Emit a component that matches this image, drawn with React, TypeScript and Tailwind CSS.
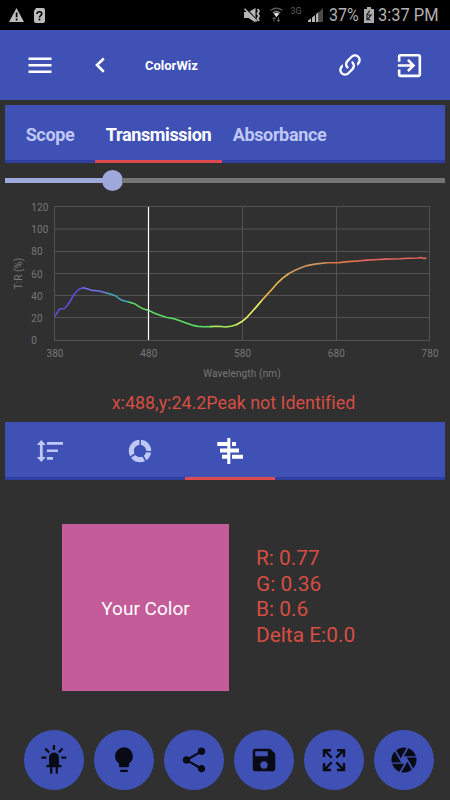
import React from "react";
import {
  MdCamera,
  MdExitToApp,
  MdSave,
  MdShare,
} from "react-icons/md";

type Point = [number, number];

const curve: { color: string; points: Point[] }[] = [
  { color: "#5a50d8", points: [[55, 316], [57.5, 312.3], [59.5, 309], [64.5, 308.5], [67, 305.8], [70, 301.5], [73, 296], [76, 292], [79, 289.3], [83.3, 287.8]] },
  { color: "#6f70e2", points: [[83.3, 287.8], [88, 289], [92, 290.4], [97, 290.8], [102, 291.8], [106.5, 293]] },
  { color: "#48a6b4", points: [[106.5, 293], [111, 294.2], [116, 296], [119, 298.6], [122, 300.2], [129.5, 302.2]] },
  { color: "#5bdc62", points: [[129.5, 302.2], [134.5, 303.7], [139, 306.6], [143, 308.8], [149, 310.6], [154, 312.9], [160, 315.3], [166, 317.2], [174, 318.7], [180, 320.8], [186, 323], [192, 325.1], [198, 326.4], [204, 326.7], [211, 326.6]] },
  { color: "#a6ed58", points: [[211, 326.6], [216, 326.2], [221, 326.5], [226, 327], [232, 326], [237, 324.4]] },
  { color: "#eef465", points: [[237, 324.4], [242, 321.5], [247, 317.3], [252, 311.8], [257, 306.1], [262, 300.3]] },
  { color: "#e9b650", points: [[262, 300.3], [267, 294.6], [272, 289.2], [277, 283.4], [283, 277.8], [289, 273.5]] },
  { color: "#cc985c", points: [[289, 273.5], [295, 270.3], [301, 267.8], [307, 265.6], [315, 264.1], [327, 262.7]] },
  { color: "#dc7546", points: [[327, 262.7], [339, 262.6], [348, 261.6], [358, 261]] },
  { color: "#e2655e", points: [[358, 261], [367, 260.1], [378, 259.5], [385, 259.1], [400, 258.8], [408, 258.3], [418, 258], [421, 257.5], [424, 258.4], [426, 258.3]] },
];

const toPath = (points: Point[]) =>
  points.map(([x, y], i) => `${i ? "L" : "M"}${x} ${y}`).join(" ");

function StatusBar() {
  return (
    <div className="flex h-[30px] items-center bg-black text-[#b0b0b0]">
      <svg viewBox="0 0 50 30" className="h-[30px] w-[50px] shrink-0" fill="#bdbdbd">
        <path d="M16.5 8 24 22H9Z" />
        <path d="M16.6 12.5v4.8M16.6 18.6v2" stroke="#000" strokeWidth="1.7" />
        <path d="M36 8h7a2 2 0 0 1 2 2v11a2 2 0 0 1-2 2h-7a2 2 0 0 1-2-2V11Z" />
        <path d="M37 14c0-3.2 4.8-2.8 4.8-.2 0 1.9-2.3 1.8-2.3 3.6M39.5 18.6v1.8" stroke="#000" strokeWidth="1.6" fill="none" />
      </svg>
      <svg viewBox="240 0 85 30" className="ml-[190px] h-[30px] w-[85px] shrink-0" fill="#b5b5b5">
        <path d="M244 12h4.5l7-4v14.5l-7-4.5H244Z" />
        <path d="m245.5 8 12 13" stroke="#000" strokeWidth="1.4" />
        <path d="m244.5 8.7 12.5 12.6" stroke="#b5b5b5" strokeWidth="1.6" />
        <path d="m257.5 9 1.5 2-1.5 2.5 1.5 2.5-1.5 2.5 1.5 2.5" fill="none" stroke="#b5b5b5" strokeWidth="1.9" />
        <g fill="none" stroke="#555" strokeWidth="1.5">
          <path d="M270.5 10.5q6-4.5 12 0" />
          <path d="M272.8 13q3.7-2.8 7.4 0" stroke="#888" />
        </g>
        <path d="m273.7 13.8 2.8 3.5 2.8-3.5q-2.8-2-5.6 0Z" fill="#ddd" />
        <path d="M274 21.5v-4M272.5 19l1.5-1.7 1.5 1.7M278.5 17.5v4M277 20l1.5 1.7L280 20" fill="none" stroke="#666" />
        <text x="290.5" y="14.3" fontSize="9.5" textLength="11" lengthAdjust="spacingAndGlyphs" fill="#606060">3G</text>
        <path d="M308 22v-1.5l3-2.2V22ZM312 22v-4.6l3-2.5V22ZM316 22v-7.8l2.5-2.2v10Z" />
        <path d="m319 12 4-4v14h-4Z" fill="#4a4a4a" />
      </svg>
      <span className="ml-[4px] w-[35px] shrink-0 origin-left scale-x-[0.84] text-[19px] leading-[30px]">37%</span>
      <svg viewBox="364 0 10 30" className="h-[30px] w-[10px] shrink-0" fill="#ababab">
        <path d="M364 9h3V7h4v2h3v14h-10Z" />
        <path d="m369.8 10.5-3 4.5h4.3l-3.6 4.5M367 16v3.8h3.4" fill="none" stroke="#111" strokeWidth="1.1" />
      </svg>
      <span className="ml-[4px] origin-left scale-x-[0.865] whitespace-nowrap text-[19px] leading-[30px]">3:37 PM</span>
    </div>
  );
}

function Header() {
  return (
    <header className="flex h-[70px] items-center bg-[#3f51b5] text-white">
      <svg viewBox="0 0 24 16" className="ml-7 h-4 w-6" stroke="currentColor" strokeWidth="2.6">
        <path d="M.5 1.7h23M.5 8.2h23M.5 14.7h23" />
      </svg>
      <svg viewBox="0 0 12 16" className="ml-[42px] h-4 w-3" stroke="currentColor" strokeWidth="2.6" fill="none">
        <path d="M9.8 1.5 3 8l6.8 6.7" />
      </svg>
      <h1 className="ml-[39px] w-[191px] pt-px text-[13px] font-bold">ColorWiz</h1>
      <svg viewBox="0 0 24 24" className="h-7 w-7 shrink-0" fill="currentColor">
        <path d="M10.59,13.41C11,13.8 11,14.44 10.59,14.83C10.2,15.22 9.56,15.22 9.17,14.83C7.22,12.88 7.22,9.71 9.17,7.76V7.76L12.71,4.22C14.66,2.27 17.83,2.27 19.78,4.22C21.73,6.17 21.73,9.34 19.78,11.29L18.29,12.78C18.3,11.96 18.17,11.14 17.89,10.36L18.36,9.88C19.54,8.71 19.54,6.81 18.36,5.64C17.19,4.46 15.29,4.46 14.12,5.64L10.59,9.17C9.41,10.34 9.41,12.24 10.59,13.41M13.41,9.17C13.8,8.78 14.44,8.78 14.83,9.17C16.78,11.12 16.78,14.29 14.83,16.24V16.24L11.29,19.78C9.34,21.73 6.17,21.73 4.22,19.78C2.27,17.83 2.27,14.66 4.22,12.71L5.71,11.22C5.7,12.04 5.83,12.86 6.11,13.65L5.64,14.12C4.46,15.29 4.46,17.19 5.64,18.36C6.81,19.54 8.71,19.54 9.88,18.36L13.41,14.83C14.59,13.66 14.59,11.76 13.41,10.59C13,10.2 13,9.56 13.41,9.17Z" />
      </svg>
      <MdExitToApp className="mr-[25px] ml-auto h-[31px] w-[31px] shrink-0" />
    </header>
  );
}

function SpectrumTabs() {
  const edge = "flex items-center justify-center border-b-[3px] pt-[3px]";
  return (
    <nav className="mx-[5px] mt-[5px] flex h-[58px] bg-[#3f51b5] text-[18px] font-bold tracking-[-0.35px] text-[#bfc7f5]">
      <div className={`${edge} w-[90px] border-[#303f9f]`}>Scope</div>
      <div className={`${edge} w-[127px] border-[#dd4b50] text-white`}>Transmission</div>
      <div className={`${edge} w-[115px] border-[#303f9f]`}>Absorbance</div>
      <div className={`${edge} flex-1 border-[#303f9f]`} />
    </nav>
  );
}

function Slider() {
  return (
    <div className="mx-[5px] flex h-[35px] items-center">
      <div className="h-[5px] w-[98px] bg-[#9fa8da]" />
      <div className="-mx-px h-[21px] w-[21px] rounded-full bg-[#9fa8da]" />
      <div className="h-[5px] flex-1 bg-[#757575]" />
    </div>
  );
}

function Chart() {
  return (
    <svg viewBox="0 198 450 187" className="block h-[187px] w-full text-[10px]" fill="#777">
      <g stroke="#525252" strokeWidth="1">
        {[206.5, 229, 251.5, 273.5, 295.5, 317.5, 340.5].map((y) => (
          <path key={y} d={`M54 ${y}H430`} />
        ))}
        {[54.5, 242.5, 336.5, 429.5].map((x) => (
          <path key={x} d={`M${x} 207V340`} />
        ))}
      </g>
      {["120", "100", "80", "60", "40", "20", "0"].map((t, i) => (
        <text key={t} x="31.3" y={211 + i * 22.2} letterSpacing="0.1">{t}</text>
      ))}
      {["380", "480", "580", "680", "780"].map((t, i) => (
        <text key={t} x={55 + i * 93.8} y="357" textAnchor="middle" letterSpacing="0.1">{t}</text>
      ))}
      <text x="242" y="377" textAnchor="middle" letterSpacing="0.15">Wavelength (nm)</text>
      <text transform="translate(22 273.5) rotate(-90)" textAnchor="middle">T:R (%)</text>
      <g fill="none" strokeWidth="1.6" strokeLinejoin="round" strokeLinecap="round">
        {curve.map((c) => (
          <path key={c.color} d={toPath(c.points)} stroke={c.color} />
        ))}
      </g>
      <path d="M148.5 207V340" stroke="#fff" strokeWidth="1.2" />
    </svg>
  );
}

function ToolTabs() {
  const edge = "w-[90px] border-b-[3px] flex";
  return (
    <nav className="mx-[5px] flex h-[58px] bg-[#3f51b5] text-[#bfc7f5]">
      <div className={`${edge} border-[#303f9f]`}>
        <svg viewBox="5 422 90 55" className="h-[55px] w-[90px]" fill="currentColor">
          <path d="m41.3 440 4.5 5h-3.1v12h3.1l-4.5 5-4.5-5h3.1v-12h-3.1ZM47 442h16v2.8H47ZM47 449.4h11v2.7H47ZM47 457h6v2.7h-6Z" />
        </svg>
      </div>
      <div className={`${edge} border-[#303f9f]`}>
        <svg viewBox="95 422 90 55" className="h-[55px] w-[90px]">
          <circle cx="140" cy="451" r="8.6" fill="none" stroke="currentColor" strokeWidth="5.2" />
          <path d="M140.2 451v-13M140 451l12.5 1M140 451l6.5 11M140 451l-11 7" stroke="#3f51b5" strokeWidth="1.5" />
          <circle cx="140" cy="451" r="6" fill="#3f51b5" />
        </svg>
      </div>
      <div className={`${edge} border-[#dd4b50] text-white`}>
        <svg viewBox="185 422 90 55" className="h-[55px] w-[90px]" fill="currentColor">
          <path d="M227.3 438h3v26h-3ZM217.3 442h10v4h-10ZM220 448.5h8v4h-8ZM222 454.8h6v4h-6ZM232 442h4v4h-4ZM230 448.5h9v4h-9ZM232 454.8h11v4h-11Z" />
        </svg>
      </div>
      <div className="flex-1 border-b-[3px] border-[#303f9f]" />
    </nav>
  );
}

function LedIcon() {
  return (
    <svg viewBox="0 0 30 30" className="h-[30px] w-[30px]" fill="currentColor">
      <path d="M10 20v-7.5a5 5 0 0 1 10 0V20h2.5v2.3h-15V20Z" />
      <path d="M12.2 21v7.8M17.8 21v7.8M14.9 0v5M6.2 3.5l4 4M23.6 3.5l-4 4M2.5 12.7h5M22.3 12.7h5" stroke="currentColor" strokeWidth="2.3" />
    </svg>
  );
}

function BulbIcon() {
  return (
    <svg viewBox="0 0 30 30" className="h-[30px] w-[30px]" fill="currentColor">
      <path d="M15 2.3a9 9 0 0 0-9 9c0 3.2 1.7 5.7 4 7.3v2.7q0 1 1 1h8q1 0 1-1v-2.7a9 9 0 0 0-5-16.3ZM11.2 24.7h7.6v2.3h-7.6Z" />
    </svg>
  );
}

function ExpandIcon() {
  return (
    <svg viewBox="0 0 30 30" className="h-[30px] w-[30px]" fill="none" stroke="currentColor" strokeWidth="2.4">
      <path d="M5 12V5.2h7M18 5.2h7V12M25 18v7h-7M12 25H5v-7M5.5 5.5l7.2 7.2M24.5 5.5l-7.2 7.2M24.5 24.5l-7.2-7.2M5.5 24.5l7.2-7.2" />
    </svg>
  );
}

const actions = [
  { name: "led", icon: <LedIcon /> },
  { name: "light", icon: <BulbIcon /> },
  { name: "share", icon: <MdShare className="h-[30px] w-[30px]" /> },
  { name: "save", icon: <MdSave className="h-[30px] w-[30px]" /> },
  { name: "expand", icon: <ExpandIcon /> },
  { name: "capture", icon: <MdCamera className="h-[30px] w-[30px]" /> },
];

export default function App() {
  return (
    <div className="flex h-[800px] w-[450px] flex-col overflow-hidden bg-[#303030] font-[Roboto,sans-serif]">
      <StatusBar />
      <Header />
      <SpectrumTabs />
      <Slider />
      <Chart />
      <p className="h-[37px] pl-[17px] text-center text-[17.9px] leading-[35px] text-[#d64d44] [font-variant-ligatures:none]">
        x:488,y:24.2Peak not Identified
      </p>
      <ToolTabs />
      <div className="mt-11 flex h-[167px] pl-[62px]">
        <div className="flex w-[167px] items-center justify-center bg-[#c45c99] pt-[3px] text-[19px] text-white">
          Your Color
        </div>
        <div className="ml-[27px] pt-[22px] text-[20.9px] leading-[25.5px] text-[#d64d44]">
          <p>R: 0.77</p>
          <p>G: 0.36</p>
          <p>B: 0.6</p>
          <p>Delta E:0.0</p>
        </div>
      </div>
      <div className="mt-[39px] flex gap-2.5 pl-6 text-[#080b16]">
        {actions.map((a) => (
          <button key={a.name} className="flex h-[60px] w-[60px] shrink-0 items-center justify-center rounded-full bg-[#3f51b5]">
            {a.icon}
          </button>
        ))}
      </div>
    </div>
  );
}
